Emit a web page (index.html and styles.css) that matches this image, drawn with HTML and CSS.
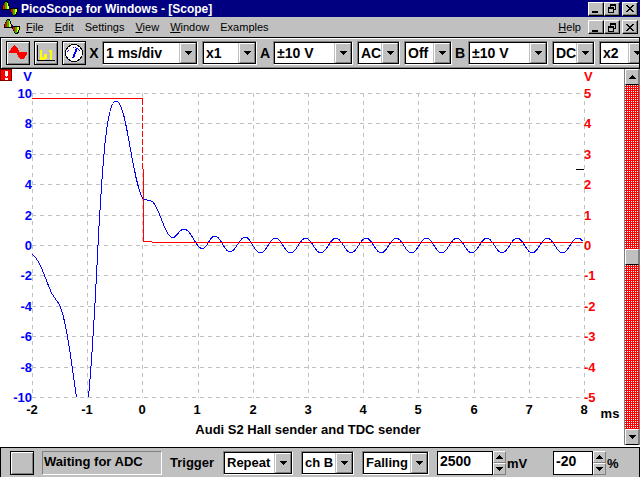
FILE: index.html
```html
<!DOCTYPE html>
<html lang="en">
<head>
    <meta charset="UTF-8">
    <meta name="viewport" content="width=device-width, initial-scale=1.0">
    <title>PicoScope for Windows - [Scope]</title>
    <link rel="stylesheet" href="styles.css">
</head>
<body>

    <!-- Shared shapes -->
    <svg class="defs" aria-hidden="true">
        <symbol id="logo" viewBox="0 0 16 16">
            <path d="M0 9V5h1V3h1V1h1V0h3v2h1v3h1v4z" fill="#000"/>
            <path d="M1 8V4h1V2h1v6z" fill="#f00"/>
            <path d="M3 8V1h2v7z" fill="#0c0"/>
            <path d="M5 8V2h1v3h1v3z" fill="#ff0"/>
            <path d="M7 6h2v4h-1v-2h-1z" fill="#00f"/>
            <path d="M8 7h8v4h-1v3h-1v1h-3v-1h-1v-2h-1v-2h-1z" fill="#000"/>
            <path d="M9 8h2v5h-1v-2h-1z" fill="#f00"/>
            <path d="M11 8h2v6h-2z" fill="#0c0"/>
            <path d="M13 8h2v3h-1v2h-1z" fill="#ff0"/>
        </symbol>
        <symbol id="down" viewBox="0 0 7 4">
            <path d="M0 0h7v1h-1v1h-1v1h-1v1h-1v-1h-1v-1h-1v-1h-1z"/>
        </symbol>
        <symbol id="up" viewBox="0 0 7 4">
            <path d="M0 4h7v-1h-1v-1h-1v-1h-1v-1h-1v1h-1v1h-1v1h-1z"/>
        </symbol>
        <symbol id="min" viewBox="0 0 10 9">
            <path d="M1 7h6v2h-6z"/>
        </symbol>
        <symbol id="restore" viewBox="0 0 10 9">
            <path d="M3 0h6v6h-2v-1h1v-3h-4v1h-1zM1 3h6v6h-6zM2 5v3h4v-3z" fill-rule="evenodd"/>
        </symbol>
        <symbol id="close" viewBox="0 0 10 9">
            <path d="M1 1h2v1h1v1h2v-1h1v-1h2v1h-1v1h-1v1h-1v1h1v1h1v1h1v1h-2v-1h-1v-1h-2v1h-1v1h-2v-1h1v-1h1v-1h1v-1h-1v-1h-1v-1h-1z"/>
        </symbol>
    </svg>

    <!-- Title bar -->
    <header class="title-bar">
        <svg class="logo"><use href="#logo"/></svg>
        <h1>PicoScope for Windows - [Scope]</h1>
        <div class="win-buttons">
            <button type="button" aria-label="Minimize"><svg><use href="#min"/></svg></button>
            <button type="button" aria-label="Restore"><svg><use href="#restore"/></svg></button>
            <button type="button" class="close" aria-label="Close"><svg><use href="#close"/></svg></button>
        </div>
    </header>

    <!-- Menu -->
    <nav class="menu-bar">
        <svg class="logo"><use href="#logo"/></svg>
        <div class="menu-items">
            <a href="#"><u>F</u>ile</a>
            <a href="#"><u>E</u>dit</a>
            <a href="#">Settings</a>
            <a href="#"><u>V</u>iew</a>
            <a href="#"><u>W</u>indow</a>
            <a href="#">Examples</a>
        </div>
        <a href="#" class="help"><u>H</u>elp</a>
        <div class="win-buttons">
            <button type="button" aria-label="Minimize scope"><svg><use href="#min"/></svg></button>
            <button type="button" aria-label="Restore scope"><svg><use href="#restore"/></svg></button>
            <button type="button" class="close" aria-label="Close scope"><svg><use href="#close"/></svg></button>
        </div>
    </nav>

    <!-- Toolbar -->
    <div class="toolbar">
        <div class="group">
            <button type="button" class="tool-btn" aria-label="Scope">
                <svg viewBox="0 0 20 20"><path d="M1 10v-2h1v-1h1v-2h1v-1h1v-1h1v-1h1v1h1v1h1v1h1v2h1v2h8v3h-1v1h-1v2h-1v1h-4v-1h-1v-1h-1v-2h-1v-2z" fill="#f00"/></svg>
            </button>
            <button type="button" class="tool-btn" aria-label="Spectrum">
                <svg viewBox="0 0 20 20"><path d="M1 2h1v15h17v1h-18z" fill="#000"/><path d="M4 7h2v7h2v-3h3v5h-2v1h-5zM13 7h3v10h-2v-8h-1z" fill="#ff0"/></svg>
            </button>
            <button type="button" class="tool-btn" aria-label="Meter">
                <svg viewBox="0 0 20 20"><circle cx="10" cy="10" r="8.500" fill="#fff" stroke="#000"/><path d="M13 5L9 15" fill="none" stroke="#00f" stroke-width="2"/><path d="M3 9L6 6M14 6l3 3M9 4h3" stroke="#00f" stroke-dasharray="1 1"/></svg>
            </button>
        </div>
        <label for="timebase">X</label>
        <div class="group">
            <div class="combo w96">
                <select id="timebase"><option>1 ms/div</option></select>
                <span class="arrow"><svg><use href="#down"/></svg></span>
            </div>
            <div class="combo w55">
                <select aria-label="X multiplier"><option>x1</option></select>
                <span class="arrow"><svg><use href="#down"/></svg></span>
            </div>
        </div>
        <label for="rangeA">A</label>
        <div class="group">
            <div class="combo w80">
                <select id="rangeA"><option>±10 V</option></select>
                <span class="arrow"><svg><use href="#down"/></svg></span>
            </div>
            <div class="combo w43">
                <select aria-label="A coupling"><option>AC</option></select>
                <span class="arrow"><svg><use href="#down"/></svg></span>
            </div>
            <div class="combo w48">
                <select aria-label="A multiplier"><option>Off</option></select>
                <span class="arrow"><svg><use href="#down"/></svg></span>
            </div>
        </div>
        <label for="rangeB">B</label>
        <div class="group">
            <div class="combo w80">
                <select id="rangeB"><option>±10 V</option></select>
                <span class="arrow"><svg><use href="#down"/></svg></span>
            </div>
            <div class="combo w43">
                <select aria-label="B coupling"><option>DC</option></select>
                <span class="arrow"><svg><use href="#down"/></svg></span>
            </div>
            <div class="combo w48">
                <select aria-label="B multiplier"><option>x2</option></select>
                <span class="arrow"><svg><use href="#down"/></svg></span>
            </div>
        </div>
    </div>

    <!-- Scope display -->
    <main class="scope">
        <svg class="chart" viewBox="0 69 624 378" role="img" aria-label="Audi S2 Hall sender and TDC sender">
            <!-- Overrange flag -->
            <rect x="0" y="69" width="12" height="12" fill="#800000"/>
            <rect x="1" y="70" width="10" height="10" fill="#f00"/>
            <path d="M5 71h3v5h-1v1h-1v-1h-1zM5 78h3v2h-3z" fill="#fff"/>
            <rect x="50" y="69" width="1" height="1" fill="#ff0"/>

            <g class="grid">
                <path d="M32 93.5H584M32 123.5H584M32 154.5H584M32 184.5H584M32 215.5H584M32 245.5H584M32 275.5H584M32 306.5H584M32 336.5H584M32 367.5H584M32 397.5H584"/>
                <path d="M32.5 93V398M87.5 93V398M142.5 93V398M198.5 93V398M253.5 93V398M308.5 93V398M363.5 93V398M418.5 93V398M474.5 93V398M529.5 93V398M584.5 93V398"/>
            </g>

            <!-- Channel A -->
            <path class="trace-a" d="M32 254.500C38 257 44 274 49 287C53 299 57 299 60 306C68 325 72 369 76.500 397.500"/>
            <path class="trace-a" d="M88.500 397.500C95 325 97 255 100 210C103 160 107 101 116 101C127 101 132 182 143 199C146 201 150 199 153 202C160 209 165 237.500 173 237.500C177 237.500 179 229 184 229C192 229 195 248.500 202 248.500C208 248.500 209 236 215 236C221 236 224 252 230.100 252C236 252 239 237 245.300 237C251 237 254 253 260.400 253
                s9 -15 15.100 -15s9 15 15.100 15s9 -15 15.100 -15s9 15 15.100 15s9 -15 15.100 -15s9 15 15.100 15s9 -15 15.100 -15s9 15 15.100 15s9 -15 15.100 -15s9 15 15.100 15s9 -15 15.100 -15s9 15 15.100 15s9 -15 15.100 -15s9 15 15.100 15s9 -15 15.100 -15s9 15 15.100 15s9 -15 15.100 -15s9 15 15.100 15s9 -15 15.100 -15s9 15 15.100 15s9 -15 15.100 -15q3 0 5 3"/>

            <!-- Channel B -->
            <path class="trace-b" d="M32 98.500H143"/>
            <path class="trace-b" stroke-dasharray="6 2" d="M142.500 99V169"/>
            <path class="trace-b" d="M143.500 169V241.500H152M152 242.500H583"/>
            <path d="M576 169.500H584" stroke="#000"/>

            <g class="axis-a">
                <text x="32" y="81">V</text>
                <text x="32" y="98">10</text>
                <text x="32" y="128">8</text>
                <text x="32" y="159">6</text>
                <text x="32" y="189">4</text>
                <text x="32" y="220">2</text>
                <text x="32" y="250">0</text>
                <text x="32" y="280">-2</text>
                <text x="32" y="311">-4</text>
                <text x="32" y="341">-6</text>
                <text x="32" y="372">-8</text>
                <text x="32" y="402">-10</text>
            </g>
            <g class="axis-b">
                <text x="584" y="81">V</text>
                <text x="584" y="98">5</text>
                <text x="584" y="128">4</text>
                <text x="584" y="159">3</text>
                <text x="584" y="189">2</text>
                <text x="584" y="220">1</text>
                <text x="584" y="250">0</text>
                <text x="584" y="280">-1</text>
                <text x="584" y="311">-2</text>
                <text x="584" y="341">-3</text>
                <text x="584" y="372">-4</text>
                <text x="584" y="402">-5</text>
            </g>
            <g class="axis-x">
                <text x="32" y="414">-2</text>
                <text x="87" y="414">-1</text>
                <text x="142" y="414">0</text>
                <text x="197" y="414">1</text>
                <text x="253" y="414">2</text>
                <text x="308" y="414">3</text>
                <text x="363" y="414">4</text>
                <text x="418" y="414">5</text>
                <text x="474" y="414">6</text>
                <text x="529" y="414">7</text>
                <text x="584" y="414">8</text>
                <text x="610" y="418">ms</text>
                <text x="308" y="434">Audi S2 Hall sender and TDC sender</text>
            </g>
        </svg>

        <div class="scrollbar">
            <button type="button" aria-label="Scroll up"><svg><use href="#up"/></svg></button>
            <div class="track">
                <div class="thumb"></div>
            </div>
            <button type="button" aria-label="Scroll down"><svg><use href="#down"/></svg></button>
        </div>
    </main>

    <!-- Trigger bar -->
    <footer class="status-bar">
        <button type="button" class="tool-btn" aria-label="Start or stop"></button>
        <output class="status">Waiting for ADC</output>
        <label for="trigger">Trigger</label>
        <div class="combo w70">
            <select id="trigger"><option>Repeat</option></select>
            <span class="arrow"><svg><use href="#down"/></svg></span>
        </div>
        <div class="combo w53">
            <select aria-label="Trigger channel"><option>ch B</option></select>
            <span class="arrow"><svg><use href="#down"/></svg></span>
        </div>
        <div class="combo w67">
            <select aria-label="Trigger direction"><option>Falling</option></select>
            <span class="arrow"><svg><use href="#down"/></svg></span>
        </div>
        <div class="spin level">
            <input type="text" id="level" value="2500">
            <div class="spin-btns">
                <button type="button" aria-label="Raise level"><svg><use href="#up"/></svg></button>
                <button type="button" aria-label="Lower level"><svg><use href="#down"/></svg></button>
            </div>
            <label for="level">mV</label>
        </div>
        <div class="spin delay">
            <input type="text" id="delay" value="-20">
            <div class="spin-btns">
                <button type="button" aria-label="Raise delay"><svg><use href="#up"/></svg></button>
                <button type="button" aria-label="Lower delay"><svg><use href="#down"/></svg></button>
            </div>
            <label for="delay">%</label>
        </div>
    </footer>

</body>
</html>
```

FILE: styles.css
```css
/* General */
* {
    box-sizing: border-box;
}

body {
    margin: 0;
    min-height: 100vh;
    display: flex;
    flex-direction: column;
    background: #fff;
    color: #000;
    font-family: "Liberation Sans", Arial, sans-serif;
    font-size: 13px;
    font-weight: bold;
    line-height: 16px;
}

svg {
    display: block;
    shape-rendering: crispEdges;
}

.defs {
    display: none;
}

button {
    margin: 0;
    padding: 0;
    background: #c0c0c0;
    border: 1px solid;
    border-color: #fff #000 #000 #fff;
    border-radius: 0;
    display: flex;
    align-items: center;
    justify-content: center;
}

.logo {
    width: 16px;
    height: 16px;
    flex: none;
}

/* Title bar */
.title-bar {
    display: flex;
    align-items: center;
    height: 17px;
    padding: 0 2px 0 2px;
    background: #000080;
    color: #fff;
}

.title-bar h1 {
    flex: 1;
    margin: 0 0 0 3px;
    font-size: 12px;
    line-height: 16px;
    white-space: nowrap;
}

.win-buttons {
    display: flex;
}

.win-buttons button {
    width: 16px;
    height: 14px;
    box-shadow: inset -1px -1px #808080;
}

.win-buttons svg {
    width: 10px;
    height: 9px;
}

.win-buttons .close {
    margin-left: 2px;
}

/* Menu */
.menu-bar {
    display: flex;
    align-items: center;
    height: 20px;
    padding: 0 2px 0 4px;
    background: #c0c0c0;
    font-size: 11px;
    font-weight: normal;
}

.menu-bar a {
    color: #000;
    text-decoration: none;
}

.menu-items {
    display: flex;
    flex: 1;
    gap: 11px;
    margin-left: 6px;
}

.help {
    margin-right: 7px;
}

/* Toolbar */
.toolbar {
    display: flex;
    align-items: center;
    height: 32px;
    padding-left: 5px;
    overflow: hidden;
    background: #c0c0c0;
    border: 1px solid #000;
    box-shadow: inset 1px 1px #fff, inset 0 -1px #808080;
}

.toolbar label {
    width: 16px;
    flex: none;
    text-align: center;
    font-size: 14px;
}

.group {
    display: flex;
    flex: none;
    gap: 4px;
}

.tool-btn {
    width: 24px;
    height: 24px;
    flex: none;
    border-color: #000;
    box-shadow: inset 1px 1px #fff, inset -1px -1px #808080;
}

.tool-btn svg {
    width: 20px;
    height: 20px;
}

/* Drop-downs */
.combo {
    display: grid;
    flex: none;
    height: 24px;
    padding: 1px;
    background: #fff;
    border: 1px solid;
    border-color: #808080 #fff #fff #808080;
    box-shadow: inset 0 0 0 1px #000;
}

.combo select,
.arrow {
    grid-area: 1 / 1;
}

.combo select {
    width: 100%;
    padding: 0 0 0 2px;
    appearance: none;
    background: transparent;
    border: none;
    color: #000;
    font: inherit;
    font-size: 14px;
}

.arrow {
    width: 16px;
    justify-self: end;
    display: flex;
    align-items: center;
    justify-content: center;
    background: #c0c0c0;
    border: 1px solid;
    border-color: #fff #808080 #808080 #fff;
    box-shadow: -1px 0 #c0c0c0;
    pointer-events: none;
}

.arrow svg,
.scrollbar svg,
.spin svg {
    width: 7px;
    height: 4px;
}

.w43 { width: 43px; }
.w48 { width: 48px; }
.w53 { width: 53px; }
.w55 { width: 55px; }
.w67 { width: 67px; }
.w70 { width: 70px; }
.w80 { width: 80px; }
.w96 { width: 96px; }

/* Scope display */
.scope {
    flex: 1;
    display: flex;
    min-height: 0;
}

.chart {
    flex: 1;
    min-width: 0;
}

.grid {
    stroke: #c0c0c0;
    stroke-dasharray: 4 4;
}

.trace-a {
    fill: none;
    stroke: #00f;
}

.trace-b {
    fill: none;
    stroke: #f00;
}

.axis-a {
    fill: #00f;
    text-anchor: end;
}

.axis-b {
    fill: #f00;
}

.axis-x {
    text-anchor: middle;
}

/* Scroll bar */
.scrollbar {
    width: 16px;
    display: flex;
    flex-direction: column;
    margin-bottom: 2px;
    border-left: 1px solid #808080;
    border-right: 1px solid #808080;
}

.scrollbar button,
.thumb {
    height: 16px;
    flex: none;
    background: #c0c0c0;
    border: 1px solid;
    border-color: #fff #808080 #000 #fff;
}

.track {
    flex: 1;
    display: flex;
    flex-direction: column;
    justify-content: center;
    background: repeating-conic-gradient(#f00 0 75%, #fff 0 100%) 0 0 / 2px 2px;
}

/* Trigger bar */
.status-bar {
    display: flex;
    align-items: center;
    height: 30px;
    padding-left: 9px;
    background: #c0c0c0;
    border: 1px solid #000;
    border-bottom: none;
}

.status-bar .combo {
    margin-right: 8px;
}

.status-bar .combo select {
    font-size: 13px;
}

.status {
    width: 120px;
    height: 24px;
    margin: 0 8px;
    padding: 2px 1px;
    border: 1px solid;
    border-color: #808080 #fff #fff #808080;
    white-space: nowrap;
}

.status-bar > label {
    width: 53px;
}

.spin {
    display: flex;
    align-items: center;
}

.level {
    width: 116px;
}

.spin input {
    width: 56px;
    height: 24px;
    padding: 0 2px 3px;
    background: #fff;
    border: 1px solid #000;
    border-radius: 0;
    color: #000;
    font: inherit;
    font-size: 14px;
}

.delay input {
    width: 40px;
}

.spin-btns {
    width: 13px;
}

.spin-btns button {
    width: 13px;
    height: 12px;
    border-color: #fff #808080 #808080 #fff;
}

.spin label {
    padding: 2px 0 0 1px;
}
```
